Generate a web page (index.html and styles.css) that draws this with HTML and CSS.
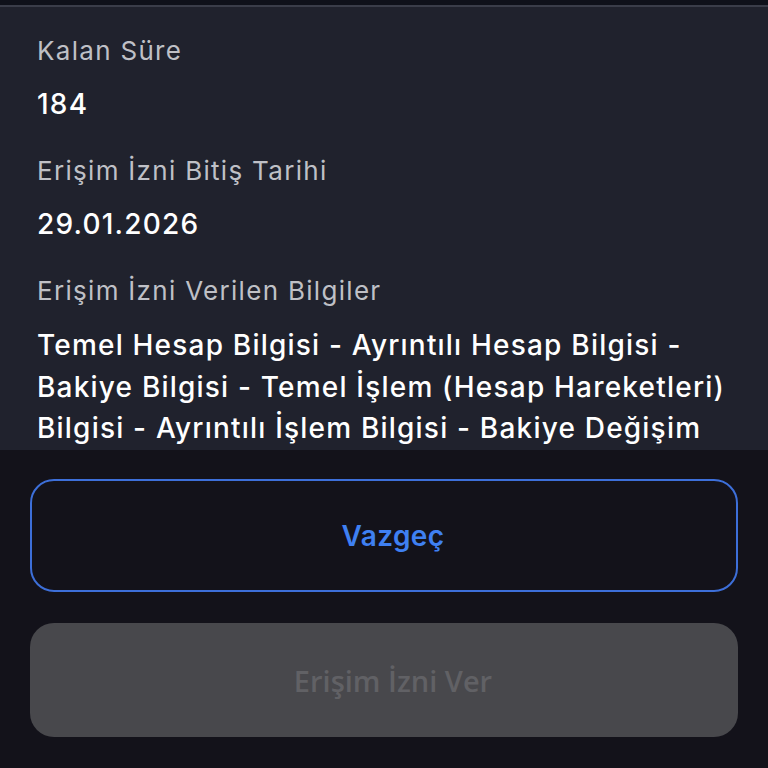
FILE: index.html
```html
<!DOCTYPE html>
<html lang="tr">
<head>
<meta charset="utf-8">
<link rel="stylesheet" href="styles.css">
</head>
<body>
<div class="screen">
  <div class="topbar"></div>
  <div class="content">
    <div class="field">
      <div class="label">Kalan Süre</div>
      <div class="value">184</div>
    </div>
    <div class="field">
      <div class="label">Erişim İzni Bitiş Tarihi</div>
      <div class="value">29.01.2026</div>
    </div>
    <div class="field">
      <div class="label">Erişim İzni Verilen Bilgiler</div>
      <div class="value para">Temel Hesap Bilgisi - Ayrıntılı Hesap Bilgisi - Bakiye Bilgisi - Temel İşlem (Hesap Hareketleri) Bilgisi - Ayrıntılı İşlem Bilgisi - Bakiye Değişim Bilgisi</div>
    </div>
  </div>
  <div class="actions">
    <button class="btn btn-outline">Vazgeç</button>
    <button class="btn btn-disabled">Erişim İzni Ver</button>
  </div>
</div>
</body>
</html>
```
FILE: styles.css
```css
html, body {
  margin: 0;
  padding: 0;
  background: #13121a;
}
.screen {
  width: 768px;
  height: 768px;
  display: flex;
  flex-direction: column;
  overflow: hidden;
  font-family: "Inter", "Noto Sans", sans-serif;
}
.topbar {
  height: 5px;
  background: #0f111a;
  border-bottom: 2px solid #3a3d49;
  flex: none;
}
.content {
  height: 443px;
  flex: none;
  overflow: hidden;
  background: #20222d;
  padding: 0 20px 0 37px;
  box-sizing: border-box;
}
.field {
  display: flex;
  flex-direction: column;
}
.label {
  font-size: 26px;
  line-height: 40px;
  color: #bfc0c6;
  margin-top: 27px;
  letter-spacing: 1.3px;
}
.field:first-child .label {
  margin-top: 24px;
}
.value {
  font-size: 28px;
  line-height: 40px;
  font-weight: 500;
  color: #ffffff;
  margin-top: 13px;
  letter-spacing: 1.2px;
}
.para {
  line-height: 41.5px;
  margin-top: 14px;
}
.actions {
  flex: 1;
  background: #13121a;
  padding: 29px 30px 0 30px;
  display: flex;
  flex-direction: column;
  gap: 31px;
}
.btn {
  height: 113px;
  border-radius: 24px;
  font-family: "Inter", sans-serif;
  font-size: 28px;
  font-weight: 600;
  letter-spacing: 0.4px;
  display: flex;
  align-items: center;
  justify-content: center;
  box-sizing: border-box;
  width: 100%;
  padding: 0 0 0 18px;
}
.btn-outline {
  background: #13121a;
  border: 2px solid #3d6fd9;
  color: #3f80f2;
}
.btn-disabled {
  height: 114px;
  background: #48484c;
  border: none;
  color: #616165;
  font-family: "Open Sans", sans-serif;
  font-weight: 600;
  font-size: 29px;
  letter-spacing: 0;
}
```
